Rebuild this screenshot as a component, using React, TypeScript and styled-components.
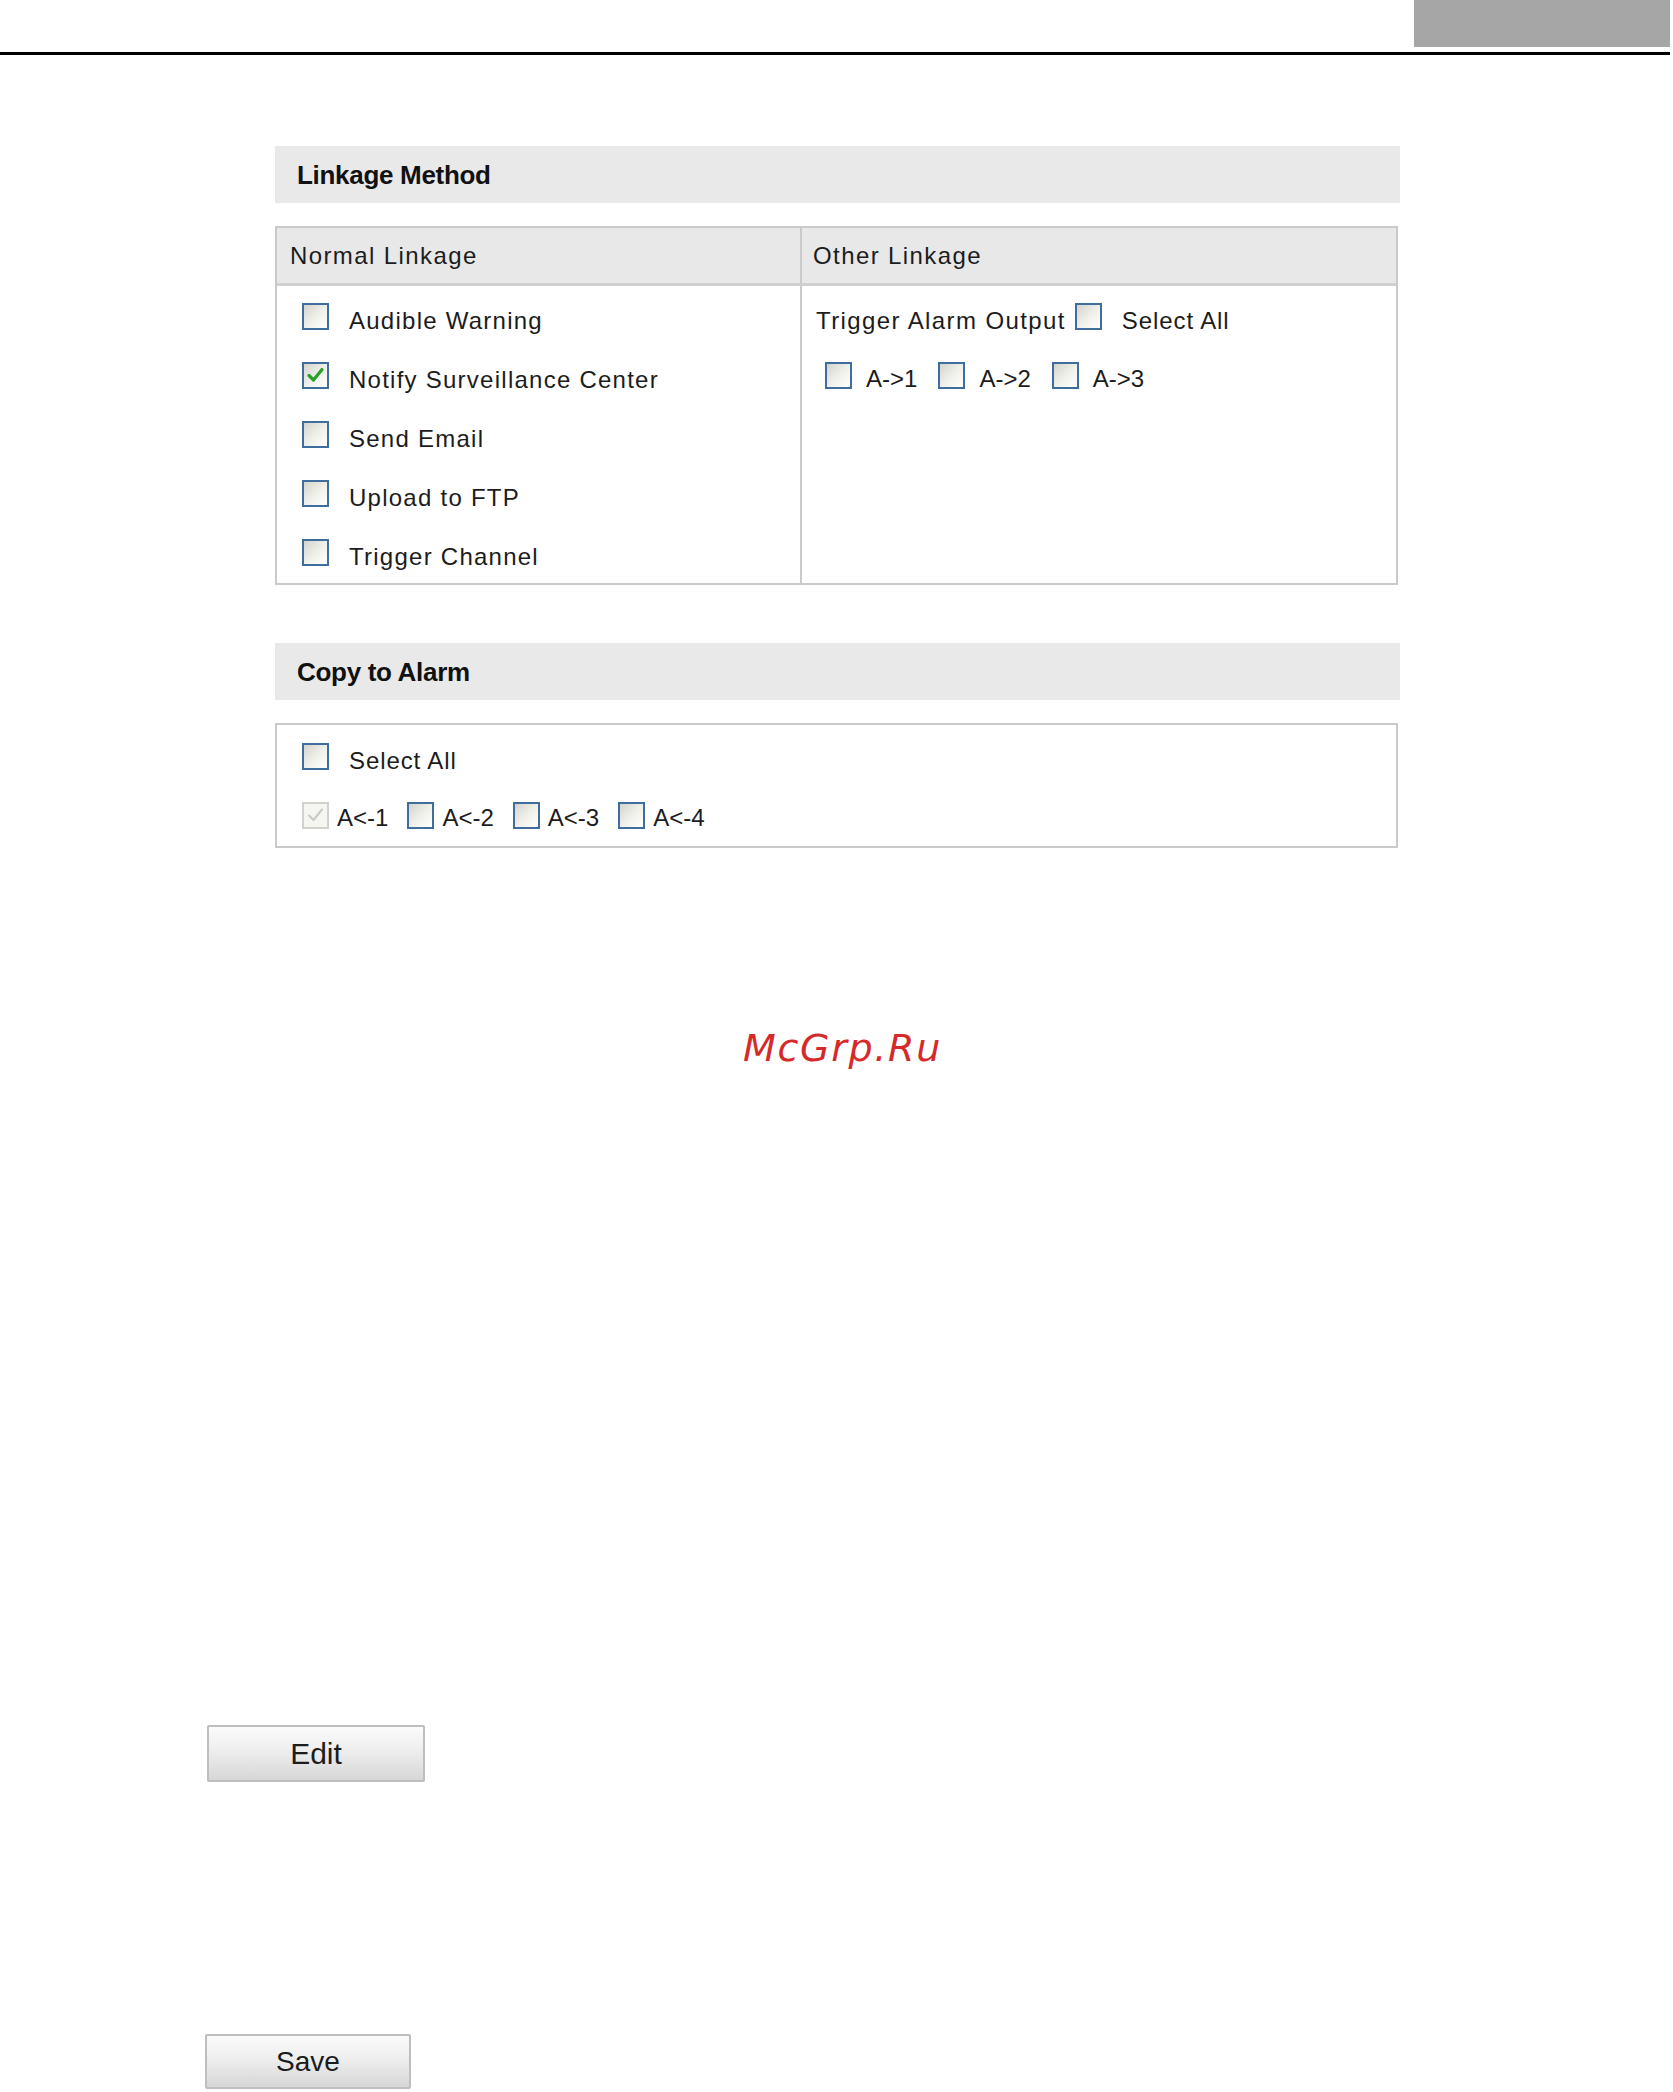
import React from "react";
import styled, { createGlobalStyle } from "styled-components";

const Global = createGlobalStyle`
  html, body { margin: 0; padding: 0; background: #ffffff; }
  body { font-family: "Liberation Sans", Arial, sans-serif; color: #1c1c1c; }
  *, *::before, *::after { box-sizing: border-box; }
`;

const Page = styled.div`
  width: 1673px;
  min-height: 2092px;
  display: flex;
  flex-direction: column;
`;

const TopBar = styled.header`
  height: 55px;
  margin-right: 3px;
  display: flex;
  justify-content: flex-end;
  border-bottom: 3px solid #000000;
`;

const GrayTab = styled.div`
  width: 256px;
  height: 47px;
  background: #a6a6a6;
`;

const Content = styled.main`
  margin-left: 275px;
  width: 1125px;
  display: flex;
  flex-direction: column;
`;

const SectionTitle = styled.h2<{ $top: number }>`
  margin: ${(p) => p.$top}px 0 0 0;
  height: 57px;
  padding: 2px 0 0 22px;
  display: flex;
  align-items: center;
  background: #e9e9e9;
  font-size: 26px;
  font-weight: bold;
  letter-spacing: -0.3px;
  color: #111111;
`;

const LinkTable = styled.section`
  margin-top: 23px;
  width: 1123px;
  border: 2px solid #cacaca;
  display: grid;
  grid-template-columns: 525px 1fr;
`;

const HeadCell = styled.div<{ $pad: number; $divider?: boolean }>`
  height: 58px;
  padding-left: ${(p) => p.$pad}px;
  display: flex;
  align-items: center;
  background: #e8e8e8;
  border-bottom: 3px solid #d0d0d0;
  border-right: ${(p) => (p.$divider ? "2px solid #cacaca" : "none")};
  font-size: 24px;
  letter-spacing: 1.4px;
  color: #1c1c1c;
`;

const BodyCell = styled.div<{ $pad: number; $divider?: boolean }>`
  padding: 1px 0 1px ${(p) => p.$pad}px;
  display: flex;
  flex-direction: column;
  border-right: ${(p) => (p.$divider ? "2px solid #cacaca" : "none")};
`;

const Row = styled.div<{ $gap: number; $indent?: number }>`
  height: 59px;
  display: flex;
  align-items: center;
  gap: ${(p) => p.$gap}px;
  padding-left: ${(p) => p.$indent ?? 0}px;
`;

const Pair = styled.span<{ $gap: number }>`
  display: inline-flex;
  align-items: center;
  gap: ${(p) => p.$gap}px;
`;

const Label = styled.span<{ $ls?: number; $drop?: number }>`
  font-size: 24px;
  letter-spacing: ${(p) => p.$ls ?? 1.25}px;
  padding-top: ${(p) => p.$drop ?? 9}px;
  line-height: 28px;
  white-space: nowrap;
  color: #1c1c1c;
`;

const CopyBox = styled.section`
  margin-top: 23px;
  width: 1123px;
  border: 2px solid #cacaca;
  padding: 2px 0 1px 25px;
  display: flex;
  flex-direction: column;
`;

const BoxFrame = styled.span<{ $disabled?: boolean }>`
  width: 27px;
  height: 27px;
  flex: none;
  display: inline-flex;
  align-items: center;
  justify-content: center;
  border: 2px solid ${(p) => (p.$disabled ? "#d2d2cc" : "#3f6d9d")};
  background: ${(p) =>
    p.$disabled
      ? "#f5f5f2"
      : "linear-gradient(135deg, #d4d4cc 0%, #efefea 50%, #ffffff 100%)"};
`;

const Watermark = styled.div`
  margin-top: 180px;
  height: 40px;
  padding-left: 12px;
  text-align: center;
  font-family: "DejaVu Sans", sans-serif;
  font-style: oblique;
  font-size: 38px;
  line-height: 40px;
  letter-spacing: 1.7px;
  color: #d62a2a;
`;

const Button = styled.button<{ $top: number; $left: number; $w: number; $h: number; $fs: number }>`
  margin: ${(p) => p.$top}px 0 0 ${(p) => p.$left}px;
  width: ${(p) => p.$w}px;
  height: ${(p) => p.$h}px;
  padding: 0;
  border: 2px solid #bebebe;
  border-radius: 2px;
  background: linear-gradient(180deg, #fbfbfb 0%, #ececec 50%, #d6d6d6 100%);
  font-family: "Liberation Sans", Arial, sans-serif;
  font-size: ${(p) => p.$fs}px;
  color: #1c1c1c;
  align-self: flex-start;
`;

function Check({ checked, disabled }: { checked?: boolean; disabled?: boolean }) {
  return (
    <BoxFrame $disabled={disabled}>
      {checked && (
        <svg width="23" height="23" viewBox="0 0 23 23">
          <path
            d="M5 11.5 L9.5 16 L18 5.5"
            fill="none"
            stroke={disabled ? "#c9c9c4" : "#27a227"}
            strokeWidth={disabled ? 2 : 3.2}
            strokeLinecap="round"
            strokeLinejoin="round"
          />
        </svg>
      )}
    </BoxFrame>
  );
}

const normal = [
  { label: "Audible Warning", checked: false },
  { label: "Notify Surveillance Center", checked: true },
  { label: "Send Email", checked: false },
  { label: "Upload to FTP", checked: false },
  { label: "Trigger Channel", checked: false },
];

export default function App() {
  return (
    <Page>
      <Global />
      <TopBar>
        <GrayTab />
      </TopBar>
      <Content>
        <SectionTitle $top={91}>Linkage Method</SectionTitle>
        <LinkTable>
          <HeadCell $pad={13} $divider>Normal Linkage</HeadCell>
          <HeadCell $pad={11}>Other Linkage</HeadCell>
          <BodyCell $pad={25} $divider>
            {normal.map((n) => (
              <Row key={n.label} $gap={20}>
                <Check checked={n.checked} />
                <Label>{n.label}</Label>
              </Row>
            ))}
          </BodyCell>
          <BodyCell $pad={14}>
            <Row $gap={20}>
              <Pair $gap={9}>
                <Label $ls={1.4}>Trigger Alarm Output</Label>
                <Check />
              </Pair>
              <Label $ls={0.9}>Select All</Label>
            </Row>
            <Row $gap={21} $indent={9}>
              {["A->1", "A->2", "A->3"].map((a) => (
                <Pair key={a} $gap={14}>
                  <Check />
                  <Label $ls={0} $drop={7}>{a}</Label>
                </Pair>
              ))}
            </Row>
          </BodyCell>
        </LinkTable>

        <SectionTitle $top={58}>Copy to Alarm</SectionTitle>
        <CopyBox>
          <Row $gap={20}>
            <Check />
            <Label $ls={0.9}>Select All</Label>
          </Row>
          <Row $gap={19}>
            {["A<-1", "A<-2", "A<-3", "A<-4"].map((a, i) => (
              <Pair key={a} $gap={8}>
                <Check checked={i === 0} disabled={i === 0} />
                <Label $ls={0} $drop={4}>{a}</Label>
              </Pair>
            ))}
          </Row>
        </CopyBox>
      </Content>

      <Watermark>McGrp.Ru</Watermark>

      <Button $top={657} $left={207} $w={218} $h={57} $fs={30}>
        Edit
      </Button>
      <Button $top={252} $left={205} $w={206} $h={55} $fs={28}>
        Save
      </Button>
    </Page>
  );
}
